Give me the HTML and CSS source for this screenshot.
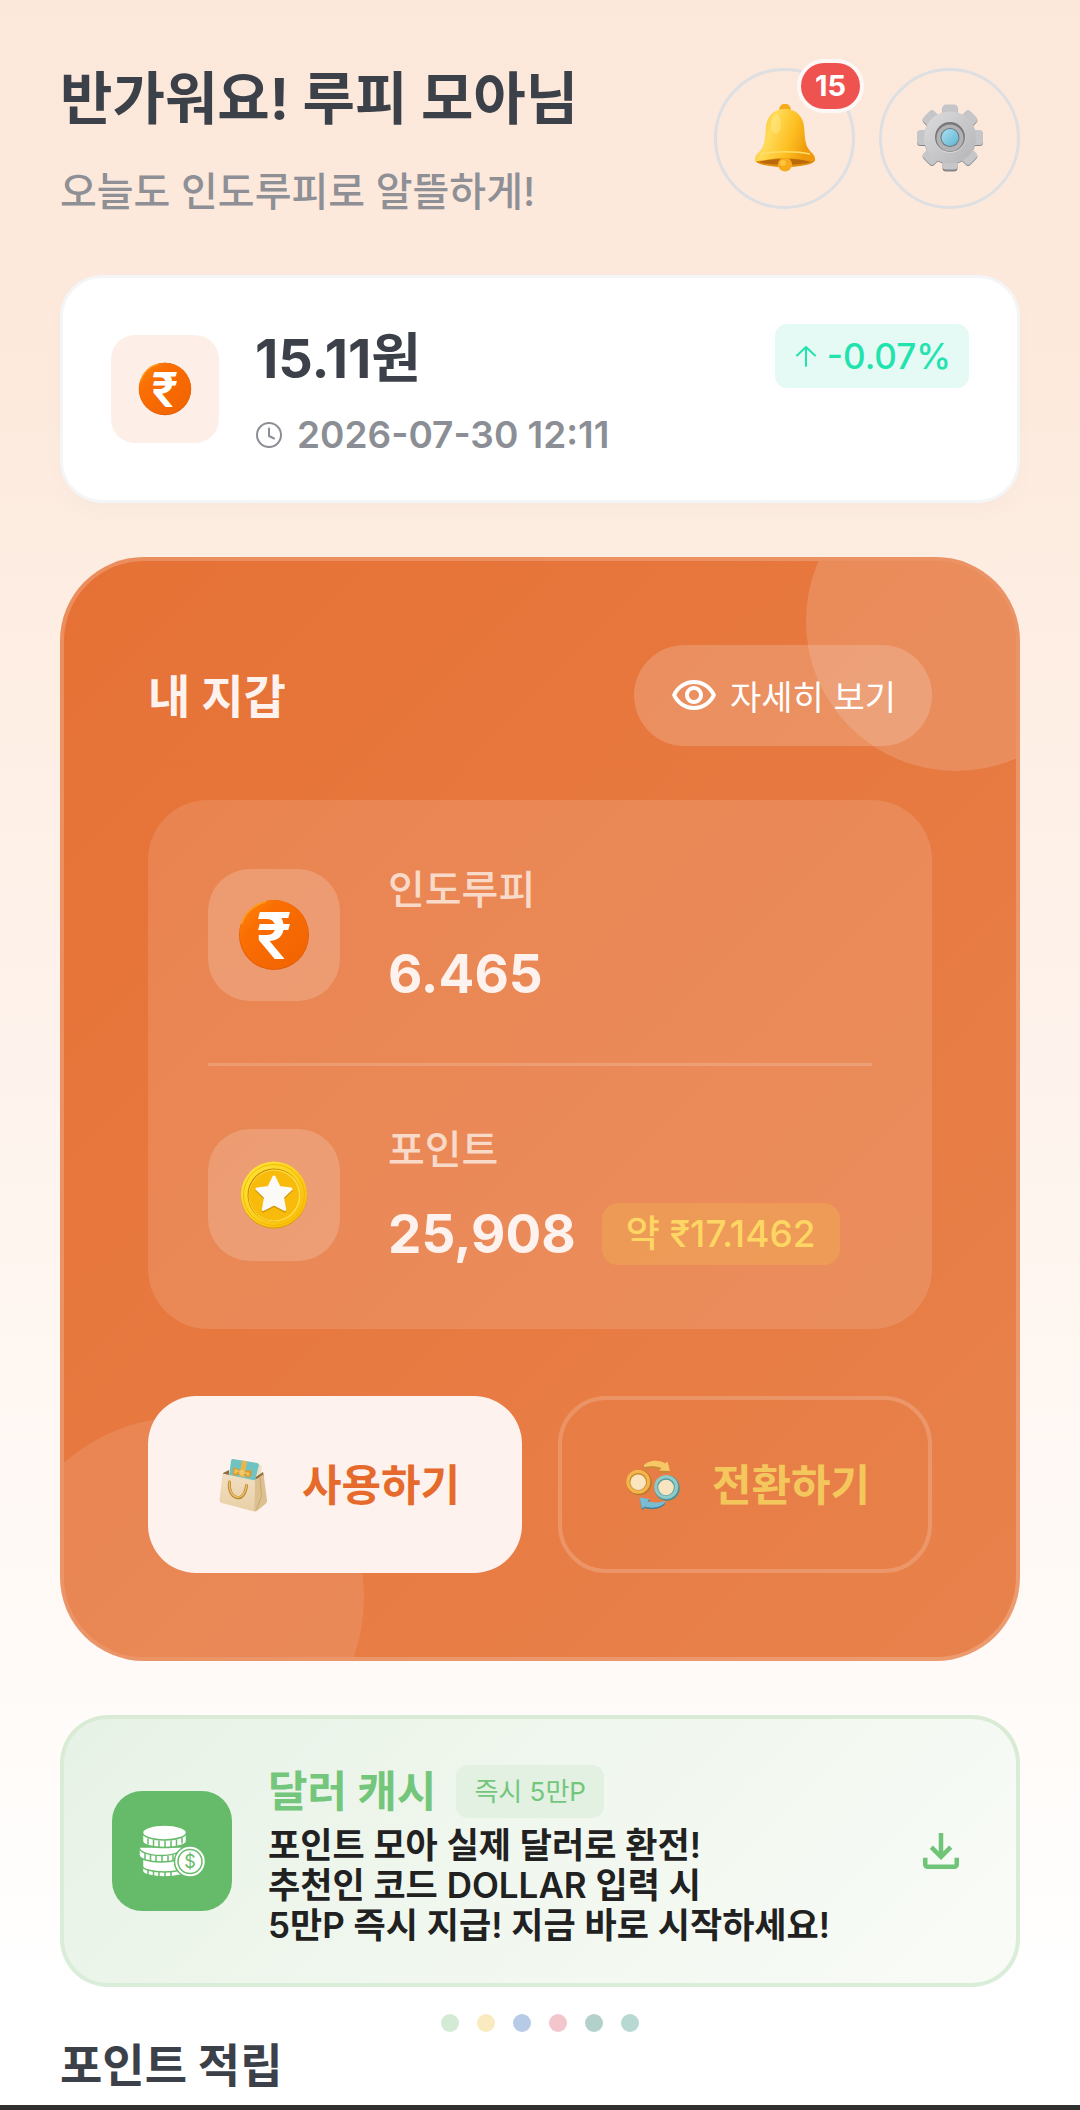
FILE: index.html
```html
<!DOCTYPE html>
<html lang="ko">
<head>
<meta charset="utf-8">
<meta name="viewport" content="width=device-width, initial-scale=1">
<title>루피 모아</title>
<link rel="stylesheet" href="styles.css">
</head>
<body>
<svg class="defs" width="0" height="0" aria-hidden="true">
  <defs>
    <linearGradient id="gold" x1="0" x2="1" y1="0" y2="0.3">
      <stop offset="0" stop-color="#f9b81f"/><stop offset="0.35" stop-color="#ffdb58"/>
      <stop offset="0.7" stop-color="#fdbf22"/><stop offset="1" stop-color="#ee9a0c"/>
    </linearGradient>
    <linearGradient id="steel" x1="0" x2="1" y1="0" y2="1">
      <stop offset="0" stop-color="#dcdcdd"/><stop offset="1" stop-color="#b4b4b7"/>
    </linearGradient>
    <linearGradient id="sky" x1="0" x2="1" y1="0" y2="1">
      <stop offset="0" stop-color="#a9e0f0"/><stop offset="1" stop-color="#62b4d2"/>
    </linearGradient>
    <linearGradient id="saffron" x1="0" x2="1" y1="0" y2="1">
      <stop offset="0" stop-color="#ff8a0a"/><stop offset="0.3" stop-color="#fa6e02"/>
      <stop offset="1" stop-color="#f06202"/>
    </linearGradient>
    <linearGradient id="coin" x1="0" x2="1" y1="0" y2="1">
      <stop offset="0" stop-color="#ffe93c"/><stop offset="1" stop-color="#f9b803"/>
    </linearGradient>
    <linearGradient id="paper" x1="0" x2="0" y1="0" y2="1">
      <stop offset="0" stop-color="#f2dfc2"/><stop offset="1" stop-color="#e8cfa5"/>
    </linearGradient>
    <symbol id="rupee-coin" viewBox="0 0 72 72">
      <circle cx="36" cy="36" r="35" fill="#e25b04"/>
      <circle cx="36" cy="35.500" r="34.500" fill="url(#saffron)"/>
      <path d="M3.500 25A34 34 0 0 1 28 2.500" fill="none" stroke="#ffa01e" stroke-width="1.500"/>
      <text x="36" y="60" text-anchor="middle" class="coin-mark">₹</text>
    </symbol>
  </defs>
</svg>

<main class="page">
  <header class="header">
    <div class="greeting">
      <h1 class="title">반가워요! 루피 모아님</h1>
      <p class="subtitle">오늘도 인도루피로 알뜰하게!</p>
    </div>
    <div class="actions">
      <button class="round" type="button" aria-label="알림 15개">
        <svg width="68" height="68" viewBox="0 0 68 68" aria-hidden="true">
          <circle cx="34" cy="5.500" r="5.800" fill="#f5ac18"/>
          <ellipse cx="34" cy="56" rx="30" ry="7" fill="#e08e0b"/>
          <path d="M34 5C22 5 15.500 13 14.800 24 14 38 13 43 8 48c-3 3-4.500 5-4 8.500C4.500 59 20 54 34 54s29.500 5 30 2.500c.5-3.500-1-5.500-4-8.500-5-5-6-10-6.800-24C52.500 13 46 5 34 5z" fill="url(#gold)"/>
          <path d="M8 58c9-2.500 17-3 26-3s17 .5 26 3c-8 3.500-44 3.500-52 0z" fill="#b9690a"/>
          <path d="M9 50c14-3 36-3 50 0" fill="none" stroke="#ffdd66" stroke-width="1.500"/>
          <ellipse cx="25" cy="20" rx="5" ry="10" fill="#fff0a0" opacity="0.350"/>
          <circle cx="34" cy="60.500" r="7" fill="#f7ab1c"/>
          <circle cx="32" cy="59" r="3" fill="#ffc94a" opacity="0.800"/>
        </svg>
        <span class="count">15</span>
      </button>
      <button class="round" type="button" aria-label="설정">
        <svg width="68" height="68" viewBox="0 0 68 68" aria-hidden="true">
          <g fill="#858589" transform="translate(0 1)">
            <circle cx="34" cy="33.500" r="26"/>
            <rect x="26.500" y="0.500" width="15" height="66" rx="3.500"/>
            <rect x="26.500" y="0.500" width="15" height="66" rx="3.500" transform="rotate(45 34 33.500)"/>
            <rect x="26.500" y="0.500" width="15" height="66" rx="3.500" transform="rotate(90 34 33.500)"/>
            <rect x="26.500" y="0.500" width="15" height="66" rx="3.500" transform="rotate(135 34 33.500)"/>
          </g>
          <g fill="#c6c6c8">
            <circle cx="34" cy="33.500" r="26"/>
            <rect x="26.500" y="0.500" width="15" height="65" rx="3.500"/>
            <rect x="26.500" y="0.500" width="15" height="66" rx="3.500" transform="rotate(45 34 33.500)"/>
            <rect x="26.500" y="0.500" width="15" height="66" rx="3.500" transform="rotate(90 34 33.500)"/>
            <rect x="26.500" y="0.500" width="15" height="66" rx="3.500" transform="rotate(135 34 33.500)"/>
          </g>
          <circle cx="34" cy="33.500" r="26" fill="url(#steel)"/>
          <circle cx="34" cy="33.500" r="15.500" fill="#d6d6d8"/>
          <circle cx="34" cy="33" r="15" fill="#77777a"/>
          <circle cx="34" cy="34" r="13.500" fill="#b2b2b4"/>
          <circle cx="34" cy="33.500" r="9.500" fill="#69777d"/>
          <circle cx="34" cy="33.500" r="8.500" fill="url(#sky)"/>
        </svg>
      </button>
    </div>
  </header>

  <section class="rate" aria-label="환율">
    <span class="rate-icon"><svg width="54" height="54" aria-hidden="true"><use href="#rupee-coin"/></svg></span>
    <div class="rate-text">
      <p class="rate-value">15.11원</p>
      <p class="rate-time">
        <svg width="28" height="28" viewBox="0 0 28 28" aria-hidden="true" fill="none" stroke="currentColor" stroke-width="2" stroke-linecap="round" stroke-linejoin="round"><circle cx="14" cy="14" r="12"/><path d="M14 7.500V15l5 2.500"/></svg>
        <time datetime="2026-07-30T12:11">2026-07-30 12:11</time>
      </p>
    </div>
    <span class="rate-change">
      <svg width="26" height="26" viewBox="0 0 26 26" aria-hidden="true" fill="none" stroke="currentColor" stroke-width="2" stroke-linecap="round" stroke-linejoin="round"><path d="M13 23V4M4 12.500L13 4l9 8.500"/></svg>
      <span>-0.07%</span>
    </span>
  </section>

  <section class="wallet" aria-labelledby="wallet-title">
    <div class="wallet-head">
      <h2 class="wallet-title" id="wallet-title">내 지갑</h2>
      <button class="detail" type="button">
        <svg width="48" height="48" viewBox="0 0 24 24" aria-hidden="true" fill="currentColor"><path d="M12 6c3.790 0 7.170 2.130 8.820 5.500C19.170 14.870 15.790 17 12 17s-7.170-2.130-8.820-5.500C4.830 8.130 8.210 6 12 6m0-2C7 4 2.730 7.110 1 11.500 2.730 15.890 7 19 12 19s9.270-3.110 11-7.500C21.270 7.110 17 4 12 4zm0 5c1.380 0 2.500 1.120 2.500 2.500S13.380 14 12 14s-2.500-1.120-2.500-2.500S10.620 9 12 9m0-2c-2.480 0-4.500 2.020-4.500 4.500S9.520 16 12 16s4.500-2.020 4.500-4.500S14.480 7 12 7z"/></svg>
        <span>자세히 보기</span>
      </button>
    </div>

    <div class="balances">
      <div class="balance">
        <span class="balance-icon"><svg width="72" height="72" aria-hidden="true"><use href="#rupee-coin"/></svg></span>
        <div class="balance-text">
          <p class="balance-label">인도루피</p>
          <p class="balance-value">6.465</p>
        </div>
      </div>
      <div class="balance">
        <span class="balance-icon">
          <svg width="68" height="68" viewBox="0 0 68 68" aria-hidden="true">
            <circle cx="34" cy="34.500" r="33" fill="#d99a04"/>
            <circle cx="34" cy="33.500" r="33" fill="url(#coin)"/>
            <circle cx="34" cy="34" r="30.500" fill="none" stroke="#f5b902" stroke-width="1"/>
            <circle cx="34" cy="34" r="26.500" fill="#c98a04"/>
            <circle cx="34.500" cy="34.500" r="26" fill="#ffe14a"/>
            <circle cx="34" cy="34.500" r="25" fill="#f9bb0b"/>
            <path d="M34 16.500l5.200 10.500 11.800 1.500-8.500 8.300 2.200 12.200L34 43.500l-10.700 5.500 2.200-12.200L17 28.500l11.800-1.500z" fill="#b57d08" opacity="0.600" transform="translate(0 1)" stroke="#b57d08" stroke-width="3" stroke-linejoin="round"/>
            <path d="M34 16l5.200 10.500 11.800 1.500-8.500 8.300 2.200 12.200L34 43l-10.700 5.500 2.200-12.200L17 28l11.800-1.500z" fill="#fbfaf6" stroke="#fbfaf6" stroke-width="3" stroke-linejoin="round"/>
          </svg>
        </span>
        <div class="balance-text">
          <p class="balance-label">포인트</p>
          <p class="balance-line"><span class="balance-value">25,908</span><span class="approx">약 ₹17.1462</span></p>
        </div>
      </div>
    </div>

    <div class="wallet-actions">
      <button class="action action-use" type="button">
        <svg width="66" height="66" viewBox="-5 -5 66 66" aria-hidden="true">
          <path d="M41 6l4.500 2c1 .5 1.500 1.500 1.300 2.500L45 22l-7-2z" fill="#efe2c4"/>
          <path d="M8 16l6-3v8l-6-2zM38 22l10-7 1 4-10 4z" fill="#8f6d3d"/>
          <path d="M18 2l24 4c1.500.300 2 1 1.800 2.500L40 24 14 19l2-15c.2-1.500.8-2.200 2-2z" fill="#6fc4c2"/>
          <path d="M27 3.500l5 1-2.500 16-5-1z" fill="#e9b54d"/>
          <path d="M7.500 16.500L40 23.500 39 54.500 7 46c-1.500-.400-2.500-1.200-2.400-3z" fill="url(#paper)"/>
          <path d="M40 23.500l8.500-6.500 3.500 26c.2 1.500-.2 2.700-1.300 3.700L42.500 53.500c-1 .8-2 1.200-3.500 1z" fill="#dcc090"/>
          <path d="M45 20.500l1.500 19-5 13" fill="none" stroke="#c6a772" stroke-width="1"/>
          <path d="M27 14l-8-4c-1.500 3-2 6-.5 9l8-2 8 4c2-2 3-5 1.500-8z" fill="#d99b33"/>
          <path d="M25 14l-5-2c-1 2-1 3-.5 5zM29 15l5 .5c1 1.500 0 3-1 3.500z" fill="#f0c05c"/>
          <circle cx="27" cy="15.500" r="2.800" fill="#f3c867"/>
          <path d="M14.500 25c-1 8 2 14 7 15.500s9-3.500 10-12" fill="none" stroke="#b8862b" stroke-width="3" stroke-linecap="round"/>
          <path d="M14.500 24.500c-1 8 2 14 7 15.500s9-3.500 10-12" fill="none" stroke="#e6bf69" stroke-width="1.500" stroke-linecap="round"/>
        </svg>
        <span>사용하기</span>
      </button>
      <button class="action action-swap" type="button">
        <svg width="66" height="66" viewBox="-5 -5 66 66" aria-hidden="true">
          <path d="M19 8c4-5 16-6 21-1.500l2.500-2L45 15l-11-.500 2.500-2.500C31 9.500 24 10 19 11z" fill="#c98a35" transform="translate(0 1)"/>
          <path d="M19 8c4-5 16-6 21-1.500l2.500-2L45 14l-11-.500 2.500-2.500C31 8.500 24 9 19 10z" fill="#f8c765"/>
          <path d="M40 46c-4 5-14 6.500-20 4l-3 2-2.500-12 11 2-2.500 2.500c5 1.500 11 1.500 17-.5z" fill="#3f7f98" transform="translate(0 1)"/>
          <path d="M40 45.500c-4 5-14 6.500-20 4l-3 2-2.500-11 10 1.500-2 2.500c5 1.500 11 1.500 17.500-.5z" fill="#78bcd6"/>
          <circle cx="14" cy="25.500" r="12.700" fill="#b97c27"/>
          <circle cx="13.200" cy="24.800" r="12" fill="#f4b64c"/>
          <circle cx="13.200" cy="24.800" r="8.800" fill="#c88931"/>
          <circle cx="13.200" cy="25.200" r="7.800" fill="#fae5bf"/>
          <circle cx="42" cy="31" r="12.700" fill="#4d9096"/>
          <circle cx="41.200" cy="30" r="12" fill="#8fcbc8"/>
          <circle cx="41" cy="30" r="8.800" fill="#57999d"/>
          <circle cx="41" cy="30.500" r="7.800" fill="#f8e4bf"/>
        </svg>
        <span>전환하기</span>
      </button>
    </div>
  </section>

  <a class="banner" href="#dollar-cash">
    <span class="banner-icon">
      <svg width="68" height="54" viewBox="-1 -1 68 54" aria-hidden="true">
        <g fill="#fff" stroke="#66bb6a" stroke-width="1.500">
          <path d="M3.500 40v6c0 3.500 10 6 22 6s22-2.500 22-6v-6z"/>
          <path d="M3.500 34v7c0 3.500 10 6 22 6s22-2.500 22-6v-7z"/>
          <path d="M0 22v8c0 4 10 7 22 7s22-3 22-7v-8z"/>
          <path d="M0 22c0 5 10 8.500 22 8.500S44 27 44 22z"/>
          <path d="M3.500 8v8c0 4 10 6.500 22 6.500S47.500 20 47.500 16V8z"/>
          <ellipse cx="25.500" cy="7.500" rx="22" ry="7.500"/>
          <path fill="none" d="M9 13.500v6M14.500 15v6M20 15.500v6.500M26 15.500v7M32 15.500v6.500M37.500 14.500v6.500M43 12.500v6M6 28v6M11.500 30v6M17 31v6M23 31v6M29 31v5.500M34 30v5M9 44.500v6M14.500 46v5M20 47v5M26 47v5M32 47v5"/>
          <circle cx="51" cy="36.500" r="15.500"/>
          <circle cx="51" cy="36.500" r="12"/>
        </g>
        <text x="51" y="43" text-anchor="middle" class="stack-mark">$</text>
      </svg>
    </span>
    <span class="banner-text">
      <span class="banner-head"><strong class="banner-title">달러 캐시</strong><span class="banner-tag">즉시 5만P</span></span>
      <span class="banner-copy">포인트 모아 실제 달러로 환전!<br>추천인 코드 DOLLAR 입력 시<br>5만P 즉시 지급! 지금 바로 시작하세요!</span>
    </span>
    <svg class="download" width="54" height="54" viewBox="0 0 24 24" aria-hidden="true" fill="currentColor"><path d="M18 15v3H6v-3H4v3c0 1.100.9 2 2 2h12c1.100 0 2-.9 2-2v-3h-2zm-1-4l-1.410-1.410L13 12.170V4h-2v8.170L8.410 9.590 7 11l5 5 5-5z"/></svg>
  </a>

  <div class="dots" aria-hidden="true">
    <span class="dot dot-green"></span><span class="dot dot-yellow"></span><span class="dot dot-blue"></span><span class="dot dot-pink"></span><span class="dot dot-sage"></span><span class="dot dot-mint"></span>
  </div>

  <h2 class="earn-title">포인트 적립</h2>
</main>
<div class="bottom-edge"></div>
</body>
</html>
```
FILE: styles.css
```css
* {
  box-sizing: border-box;
}

body {
  margin: 0;
  min-height: 100vh;
  display: flex;
  flex-direction: column;
  background: linear-gradient(180deg, #fce8db 0%, #fdeadd 18%, #fef3ec 50%, #fffaf7 78%, #ffffff 95%);
  color: #3c4149;
  font-family: Inter, "Noto Sans CJK KR", sans-serif;
}

h1, h2, p {
  margin: 0;
}

button {
  font: inherit;
  color: inherit;
  border: 0;
  padding: 0;
  background: none;
  cursor: pointer;
}

svg {
  display: block;
  flex: none;
}

.defs {
  position: absolute;
}

.page {
  padding: 62px 60px 0;
}

.header {
  display: flex;
  justify-content: space-between;
  align-items: center;
}

.greeting {
  display: grid;
  gap: 34px;
}

.title {
  font-size: 57px;
  line-height: 74px;
  font-weight: 700;
}

.subtitle {
  font-size: 40px;
  line-height: 44px;
  font-weight: 500;
  color: #8e9096;
}

.actions {
  display: flex;
  gap: 24px;
}

.round {
  position: relative;
  width: 141px;
  height: 141px;
  border: 3px solid #dddfe2;
  border-radius: 50%;
  display: grid;
  place-items: center;
}

.count {
  position: absolute;
  top: -12px;
  right: -12px;
  min-width: 67px;
  height: 54px;
  padding: 0 12px;
  border: 4px solid #fdf8f5;
  border-radius: 27px;
  background: #ef5350;
  color: #fff;
  font-size: 29px;
  line-height: 46px;
  font-weight: 700;
}

.rate {
  margin-top: 61px;
  padding: 46px 48px;
  display: flex;
  align-items: center;
  gap: 36px;
  border: 3px solid #f4f5f7;
  border-radius: 42px;
  background: #fff;
  box-shadow: 0 8px 24px rgba(60, 40, 20, 0.020);
}

.rate-icon {
  flex: none;
  width: 108px;
  height: 108px;
  border-radius: 24px;
  background: #fdefe8;
  display: grid;
  place-items: center;
}

.coin-mark {
  font: 600 64px Inter, sans-serif;
  fill: #fff;
}

.rate-text {
  flex: 1;
  display: grid;
  gap: 22px;
}

.rate-value {
  font-size: 54px;
  line-height: 70px;
  font-weight: 700;
}

.rate-time {
  display: flex;
  align-items: center;
  gap: 14px;
  font-size: 37px;
  line-height: 38px;
  font-weight: 600;
  color: #8b8e94;
}

.rate-change {
  align-self: flex-start;
  display: flex;
  align-items: center;
  gap: 8px;
  padding: 0 18px;
  border-radius: 12px;
  background: #e5faf5;
  color: #22e3ae;
  font-size: 35px;
  line-height: 64px;
  font-weight: 500;
}

.wallet {
  position: relative;
  overflow: hidden;
  margin-top: 54px;
  padding: 84px;
  border: 4px solid rgba(255, 255, 255, 0.200);
  border-radius: 84px;
  background: linear-gradient(135deg, #e67135, #e8824c) border-box;
  color: #fdf2ed;
}

.wallet::before,
.wallet::after {
  content: "";
  position: absolute;
  border-radius: 50%;
}

.wallet::before {
  top: -90px;
  right: -90px;
  width: 300px;
  height: 300px;
  background: rgba(255, 255, 255, 0.150);
}

.wallet::after {
  bottom: -120px;
  left: -60px;
  width: 360px;
  height: 360px;
  background: rgba(255, 255, 255, 0.100);
}

.wallet-head,
.balances,
.wallet-actions {
  position: relative;
  z-index: 1;
}

.wallet-head {
  display: flex;
  justify-content: space-between;
  align-items: center;
}

.wallet-title {
  font-size: 46px;
  line-height: 56px;
  font-weight: 700;
}

.detail {
  display: flex;
  align-items: center;
  gap: 12px;
  height: 101px;
  padding: 0 36px;
  border-radius: 51px;
  background: rgba(255, 255, 255, 0.180);
  color: #fff;
  font-size: 34px;
  font-weight: 400;
}

.balances {
  margin-top: 54px;
  padding: 60px;
  border-radius: 60px;
  background: rgba(255, 255, 255, 0.120);
}

.balance {
  display: flex;
  align-items: center;
  gap: 48px;
}

.balance + .balance {
  margin-top: 54px;
  padding-top: 54px;
  border-top: 3px solid rgba(255, 255, 255, 0.180);
}

.balance-icon {
  flex: none;
  width: 132px;
  height: 132px;
  border-radius: 42px;
  background: rgba(255, 255, 255, 0.180);
  display: grid;
  place-items: center;
}

.balance-text {
  display: grid;
  gap: 19px;
}

.balance-label {
  font-size: 40px;
  line-height: 60px;
  font-weight: 500;
  color: #f9d9c8;
}

.balance-line {
  display: flex;
  align-items: center;
  gap: 26px;
}

.balance-value {
  font-size: 53px;
  line-height: 70px;
  font-weight: 700;
}

.approx {
  padding: 0 24px;
  border-radius: 16px;
  background: rgba(255, 213, 79, 0.200);
  color: #fdd663;
  font-size: 37px;
  line-height: 62px;
  font-weight: 500;
}

.wallet-actions {
  margin-top: 67px;
  display: grid;
  grid-template-columns: 1fr 1fr;
  gap: 36px;
}

.action {
  height: 177px;
  display: flex;
  align-items: center;
  justify-content: center;
  gap: 26px;
  border-radius: 48px;
  font-size: 43px;
  line-height: 48px;
  font-weight: 700;
}

.action-use {
  background: #fdf2ed;
  color: #e56a2c;
}

.action-swap {
  border: 4px solid rgba(255, 255, 255, 0.180);
  color: #f3c75b;
}

.banner {
  margin-top: 54px;
  padding: 38px 48px;
  display: flex;
  align-items: center;
  gap: 36px;
  border: 4px solid rgba(102, 187, 106, 0.250);
  border-radius: 48px;
  background: linear-gradient(135deg, #e7f2e6, #f0f7ee 45%, #f9fbf7) padding-box;
  color: #212121;
  text-decoration: none;
}

.banner-icon {
  flex: none;
  width: 120px;
  height: 120px;
  border-radius: 30px;
  background: #66bb6a;
  display: grid;
  place-items: center;
}

.stack-mark {
  font: 400 18px Inter, sans-serif;
  fill: #66bb6a;
}

.banner-text {
  flex: 1;
  padding-top: 8px;
  display: grid;
  gap: 7px;
}

.banner-head {
  display: flex;
  align-items: center;
  gap: 20px;
}

.banner-title {
  font-size: 43px;
  line-height: 53px;
  font-weight: 700;
  color: #74c67c;
}

.banner-tag {
  padding: 0 18px;
  border-radius: 12px;
  background: #e2f1e1;
  color: #74c67c;
  font-size: 26px;
  line-height: 53px;
}

.banner-copy {
  font-size: 35px;
  line-height: 40px;
  font-weight: 600;
}

.download {
  color: #70c478;
}

.dots {
  margin-top: 27px;
  display: flex;
  justify-content: center;
  gap: 18px;
}

.dot {
  width: 18px;
  height: 18px;
  border-radius: 50%;
}

.dot-green { background: #d3ebd4; }
.dot-yellow { background: #faeac0; }
.dot-blue { background: #b7cbe6; }
.dot-pink { background: #f3c6cd; }
.dot-sage { background: #b3d0ca; }
.dot-mint { background: #b8d8d2; }

.earn-title {
  margin-top: 6px;
  font-size: 46px;
  line-height: 54px;
  font-weight: 700;
}

.bottom-edge {
  margin-top: auto;
  height: 5px;
  background: #30302e;
}
```
